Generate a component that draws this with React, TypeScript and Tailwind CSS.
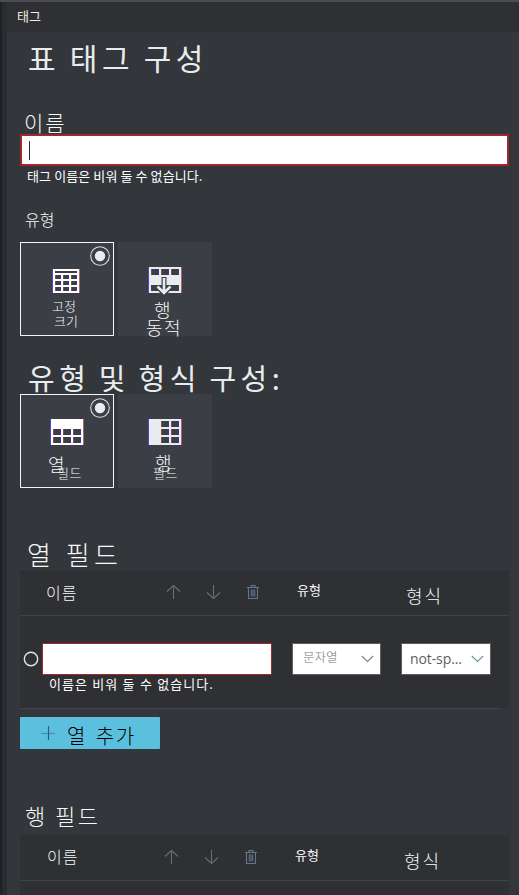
import React from 'react';

function Label({ className, children }: { className: string; children: React.ReactNode }) {
  return <div className={`whitespace-nowrap leading-none ${className}`}>{children}</div>;
}

function Radio() {
  return (
    <svg className="absolute right-[3px] top-[3px]" width="20" height="20" viewBox="0 0 20 20">
      <circle cx="10" cy="10" r="9.3" fill="none" stroke="#d9dcdf" strokeWidth="1.1" />
      <circle cx="10" cy="10" r="5.2" fill="#e8ecef" />
    </svg>
  );
}

function Cells({ xs, ys, w, h }: { xs: number[]; ys: number[]; w: number; h: number }) {
  return (
    <>
      {ys.map((y) =>
        xs.map((x) => (
          <g key={`${x}-${y}`}>
            <rect x={x} y={y} width={w} height={h} fill="#3c3e46" />
            <rect x={x} y={y} width="1" height={h} fill="#8b4a48" />
            <rect x={x + w - 1} y={y} width="1" height={h} fill="#3334b0" />
          </g>
        )),
      )}
    </>
  );
}

function Frame({ w, h, fill }: { w: number; h: number; fill: string }) {
  return (
    <>
      <rect width={w} height={h} fill={fill} />
      <rect width="1" height={h} fill="#4549cf" />
      <rect x={w - 1} width="1" height={h} fill="#b9625a" />
    </>
  );
}

function FixedIcon() {
  return (
    <svg width="28" height="24" shapeRendering="crispEdges">
      <Frame w={28} h={24} fill="#fff" />
      <rect x="3" y="2" width="22" height="2" fill="#3c3e46" />
      <Cells xs={[3, 11, 19]} ys={[6, 12, 18]} w={6} h={4} />
    </svg>
  );
}

function DynamicIcon() {
  return (
    <svg width="34" height="28">
      <g shapeRendering="crispEdges">
        <Frame w={34} h={26} fill="#e8ecef" />
        <Cells xs={[3, 13, 23]} ys={[2]} w={8} h={6} />
        <rect x="3" y="18" width="28" height="6" fill="#3c3e46" />
      </g>
      <path d="M13.500 18V10h5v8" fill="#3c3e46" />
      <path d="M7 20.500h4.500L16 26l4.500-5.500H25L18 28h-4z" fill="#3c3e46" />
      <path d="M16 11v15M9.500 19.500L16 26l6.500-6.500" fill="none" stroke="#e8ecef" strokeWidth="2.600" />
    </svg>
  );
}

function ColumnIcon() {
  return (
    <svg width="34" height="26" shapeRendering="crispEdges">
      <Frame w={34} h={26} fill="#fff" />
      <Cells xs={[3, 13, 23]} ys={[10, 18]} w={8} h={6} />
    </svg>
  );
}

function RowIcon() {
  return (
    <svg width="34" height="26" shapeRendering="crispEdges">
      <Frame w={34} h={26} fill="#e8ecef" />
      <Cells xs={[13, 23]} ys={[2, 10, 18]} w={8} h={6} />
    </svg>
  );
}

function Arrow({ down }: { down?: boolean }) {
  return (
    <svg width="15" height="16" viewBox="0 0 15 16" fill="none" stroke="#6b6c73" strokeWidth="1.1">
      <path d={down ? 'M7.500 1v13.500M1 8.500L7.500 14.500l6.500-6' : 'M7.500 15V1.500M1 7.500L7.500 1.500l6.500 6'} />
    </svg>
  );
}

function Trash() {
  return (
    <svg width="12" height="16" viewBox="0 0 12 16" fill="none" stroke="#687582" strokeWidth="1.1">
      <path d="M0 3.500h12M4 3.500V1.500h4v2M1.500 3.500v11h9v-11" />
      <path d="M4.500 5.500v7M7.500 5.500v7" stroke="#4f678b" strokeWidth="1.500" />
      <path d="M6 5.500v7" stroke="#69676c" />
    </svg>
  );
}

function Chevron({ color }: { color: string }) {
  return (
    <svg width="13" height="8" viewBox="0 0 13 8" fill="none" stroke={color} strokeWidth="1.1">
      <path d="M.8 1l5.700 5.500L12.200 1" />
    </svg>
  );
}

function TableHeader({ first }: { first?: boolean }) {
  return (
    <div className="flex h-[46px] w-[489px] border-b border-[#414349] bg-[#2e3034]">
      <div className={first ? 'w-[146px] pl-[26px] pt-[14px]' : 'w-[144px] pl-[27px] pt-[13px]'}>
        <Label className="text-[16px] tracking-[1px]">이름</Label>
      </div>
      <div className="flex w-[131px] gap-[25px] pt-[14px]">
        <Arrow />
        <Arrow down />
        <span className="pl-px"><Trash /></span>
      </div>
      <div className="w-[109px] pt-[13px]">
        <Label className="text-[13px] font-normal">유형</Label>
      </div>
      <div className="pt-[16px]">
        <Label className="text-[18px] tracking-[2px]">형식</Label>
      </div>
    </div>
  );
}

export default function App() {
  return (
    <div className="flex h-[895px] w-[519px] flex-col overflow-hidden bg-[#33363a] font-['Noto_Sans_CJK_KR',sans-serif] font-light text-[#f6f9f9]">
      <div className="h-[2px] shrink-0 bg-[#4a4d52]" />
      <div className="flex h-[893px]">
        <div className="w-[2px] bg-[#202125]" />
        <div className="w-[5px] bg-[#2a2b2f]" />
        <main className="flex w-[512px] flex-col">
          <div className="h-[30px] shrink-0 bg-[#2e3034] pl-[10px] pt-[7px]">
            <Label className="text-[13px] font-normal text-[#eeeadd]">태그</Label>
          </div>
          <div className="pl-[13px]">
            <div className="h-[80px] pl-[8px] pt-[10px]">
              <Label className="text-[30px] font-normal tracking-[4.5px] [word-spacing:-1.5px] text-[#e8ecee]">표 태그 구성</Label>
            </div>
            <div className="h-[22px] pl-[4px]">
              <Label className="text-[21px] tracking-[2px]">이름</Label>
            </div>
            <div className="h-[32px] w-[489px] rounded-[1px] border-2 border-[#a4262c] bg-white pl-[7px] pt-[5px]">
              <div className="h-[19px] w-px bg-[#292b2f]" />
            </div>
            <div className="h-[44px] pl-[7px] pt-[3px]">
              <Label className="text-[13px] font-normal tracking-[0.1px] text-white">태그 이름은 비워 둘 수 없습니다.</Label>
            </div>
            <div className="h-[32px] pl-[5px] pt-[1px]">
              <Label className="text-[16px]">유형</Label>
            </div>

            <div className="flex h-[94px] gap-1">
              <div className="relative w-[94px] border border-[#f2f4f5] bg-[#3c3e46] pl-[31px] pt-[26px]">
                <Radio />
                <FixedIcon />
                <Label className="mt-[6px] text-[13px]">고정</Label>
                <Label className="ml-[2px] mt-[2px] text-[13px]">크기</Label>
              </div>
              <div className="w-[94px] bg-[#3c3e46] pl-[30px] pt-[25px]">
                <DynamicIcon />
                <Label className="ml-[6px] mt-[5px] text-[18px]">행</Label>
                <Label className="-ml-[2px] text-[18px] tracking-[1.5px]">동적</Label>
              </div>
            </div>

            <div className="h-[58px] pl-[8px] pt-[27px]">
              <Label className="text-[29px] font-normal tracking-[4.5px] [word-spacing:-2.5px] text-[#e8ecee]">유형 및 형식 구성:</Label>
            </div>

            <div className="flex h-[94px] gap-1">
              <div className="relative w-[94px] border border-[#f2f4f5] bg-[#3c3e46] pl-[29px] pt-[24px]">
                <Radio />
                <ColumnIcon />
                <Label className="-ml-[2px] mt-[10px] text-[18px]">열</Label>
                <Label className="-mt-[7px] ml-[7px] text-[13px] tracking-[0.5px]">필드</Label>
              </div>
              <div className="w-[94px] bg-[#3c3e46] pl-[30px] pt-[25px]">
                <RowIcon />
                <Label className="ml-[7px] mt-[8px] text-[18px]">행</Label>
                <Label className="-mt-[5px] ml-[5px] text-[13px] tracking-[0.5px]">필드</Label>
              </div>
            </div>

            <div className="h-[82px] pl-[7px] pt-[53px]">
              <Label className="text-[26px] tracking-[4.500px]">열 필드</Label>
            </div>
            <TableHeader first />
            <div className="h-[92px] w-[489px] bg-[#2e3034] pt-[27px]">
              <div className="flex h-[32px] items-center">
                <div className="ml-[3px] flex w-[16px] justify-center">
                  <svg width="16" height="16" viewBox="0 0 16 16">
                    <circle cx="8" cy="8" r="6.700" fill="none" stroke="#e3e5e6" strokeWidth="1.400" />
                  </svg>
                </div>
                <div className="ml-[3px] h-[32px] w-[230px] border border-[#a4262c] bg-white" />
                <div className="ml-[20px] flex h-[32px] w-[89px] items-center justify-between border border-[#605e5c] bg-white pl-[10px] pr-[6px]">
                  <Label className="-mt-1 text-[12.5px] text-[#777573]">문자열</Label>
                  <Chevron color="#72828f" />
                </div>
                <div className="ml-[20px] flex h-[32px] w-[90px] items-center justify-between border border-[#605e5c] bg-white pl-[8px] pr-[6px]">
                  <Label className="font-['Open_Sans',sans-serif] text-[14px] font-normal tracking-[-0.1px] text-[#605e5c]">not-sp...</Label>
                  <Chevron color="#6d91a0" />
                </div>
              </div>
              <Label className="ml-[29px] mt-[2px] text-[13px] font-normal tracking-[1px] [word-spacing:0.5px] text-white">이름은 비워 둘 수 없습니다.</Label>
            </div>
            <div className="h-px w-[479px] bg-[#414349]" />
            <div className="h-[8px]" />
            <div className="flex h-[32px] w-[140px] rounded-[1px] bg-[#5bc0de] pl-[21px] pt-[9px] text-black">
              <svg width="14" height="14" viewBox="0 0 14 14">
                <path d="M0 7.500h14" stroke="#4a8fa8" strokeWidth="1.2" />
                <path d="M7.500 0v14" stroke="#3552a0" strokeWidth="1.2" />
              </svg>
              <Label className="ml-[12px] text-[20px] tracking-[1.5px] [word-spacing:3px]">열 추가</Label>
            </div>
            <div className="h-[86px] pl-[5px] pt-[55px]">
              <Label className="text-[22px] tracking-[2.500px]">행 필드</Label>
            </div>
            <TableHeader />
            <div className="h-[14px] w-[489px] bg-[#2e3034]" />
          </div>
        </main>
      </div>
    </div>
  );
}
